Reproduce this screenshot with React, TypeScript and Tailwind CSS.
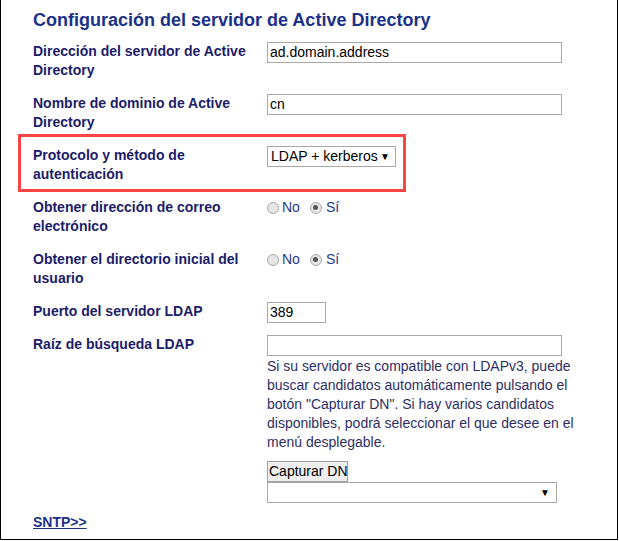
import React from "react";

const font = { fontFamily: '"Liberation Sans", Arial, Helvetica, sans-serif' };

function Radio({ checked }: { checked?: boolean }) {
  return (
    <span className="inline-flex w-[12px] h-[12px] rounded-full border border-[#a8a8a8] bg-[#e6e6e6] items-center justify-center">
      {checked && <span className="w-[5px] h-[5px] rounded-full bg-[#555]" />}
    </span>
  );
}

function Row({
  label,
  children,
}: {
  label: React.ReactNode;
  children?: React.ReactNode;
}) {
  return (
    <div className="flex py-[7px]">
      <div className="w-[226px] ml-[32px] text-[14px] leading-[19px] font-bold text-[#1c1c6a]">
        {label}
      </div>
      <div className="ml-[8px] flex-1">{children}</div>
    </div>
  );
}

function TextInput({ value, w }: { value: string; w: string }) {
  return (
    <div
      className={`${w} h-[21px] border border-[#a9a9a9] bg-white text-[14px] leading-[19px] text-black pl-[2px]`}
    >
      {value}
    </div>
  );
}

function YesNo() {
  return (
    <div className="flex items-center h-[19px] text-[14px] text-[#1e3a8a]">
      <Radio />
      <span className="ml-[3px]">No</span>
      <span className="ml-[10px] inline-flex">
        <Radio checked />
      </span>
      <span className="ml-[4px]">Sí</span>
    </div>
  );
}

export default function App() {
  return (
    <div
      style={font}
      className="relative w-[618px] h-[540px] border-l border-r border-b border-black bg-white"
    >
      <div className="pl-[32px] pt-[10px] pb-[5px] text-[18px] leading-[20px] font-bold text-[#1b3188]">
        Configuración del servidor de Active Directory
      </div>

      <Row label={<>Dirección del servidor de Active Directory</>}>
        <TextInput value="ad.domain.address" w="w-[295px]" />
      </Row>
      <Row label={<>Nombre de dominio de Active Directory</>}>
        <TextInput value="cn" w="w-[295px]" />
      </Row>
      <Row label={<>Protocolo y método de autenticación</>}>
        <div className="w-[129px] h-[21px] border border-[#a9a9a9] bg-white flex items-center justify-between pl-[3px] pr-[5px] text-[14px] text-black">
          <span className="leading-[19px]">LDAP + kerberos</span>
          <span className="text-[10px] leading-none">▼</span>
        </div>
      </Row>
      <Row label={<>Obtener dirección de correo electrónico</>}>
        <YesNo />
      </Row>
      <Row label={<>Obtener el directorio inicial del usuario</>}>
        <YesNo />
      </Row>
      <Row label="Puerto del servidor LDAP">
        <div className="h-[19px]">
          <TextInput value="389" w="w-[59px]" />
        </div>
      </Row>
      <div className="flex pt-[7px] pb-[7px]">
        <div className="w-[226px] ml-[32px] text-[14px] leading-[19px] font-bold text-[#1c1c6a]">
          Raíz de búsqueda LDAP
        </div>
        <div className="ml-[8px] flex-1">
          <TextInput value="" w="w-[295px]" />
          <p className="mt-[1px] w-[325px] text-[14px] leading-[19px] text-[#2e2e66]">
            Si su servidor es compatible con LDAPv3, puede buscar candidatos
            automáticamente pulsando el botón "Capturar DN". Si hay varios
            candidatos disponibles, podrá seleccionar el que desee en el menú
            desplegable.
          </p>
          <div className="mt-[9px] w-[81px] overflow-hidden whitespace-nowrap h-[21px] border border-[#a0a0a0] bg-[#efefef] text-[14px] leading-[19px] text-black pl-[1px]">
            Capturar DN
          </div>
          <div className="w-[290px] h-[21px] border border-[#a9a9a9] bg-white flex items-center justify-end pr-[6px]">
            <span className="text-[10px] leading-none text-black">▼</span>
          </div>
        </div>
      </div>
      <div className="pl-[32px] pt-[3px] text-[14px] leading-[19px] font-bold text-[#1b3188] underline">
        SNTP&gt;&gt;
      </div>

      <div className="absolute left-[17px] top-[134px] w-[388px] h-[58px] border-[3px] border-[#fa4545] pointer-events-none" />
    </div>
  );
}
